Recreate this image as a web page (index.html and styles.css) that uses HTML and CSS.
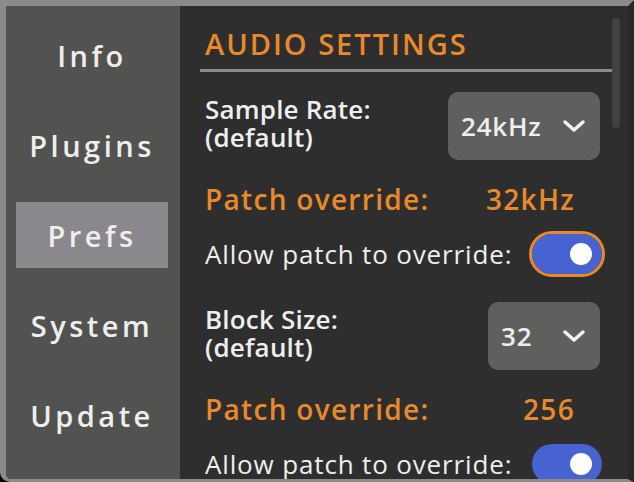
FILE: index.html
```html
<!DOCTYPE html>
<html>
<head>
<meta charset="utf-8">
<link rel="stylesheet" href="styles.css">
</head>
<body>
<div class="window">
  <nav class="sidebar">
    <div class="tab">Info</div>
    <div class="tab">Plugins</div>
    <div class="tab active">Prefs</div>
    <div class="tab">System</div>
    <div class="tab">Update</div>
  </nav>
  <main class="content">
    <div class="scrollbar"></div>
    <h1 class="heading">AUDIO SETTINGS</h1>
    <div class="setting">
      <div class="label"><div>Sample Rate:</div><div>(default)</div></div>
      <div class="select sr"><span>24kHz</span><svg class="chev" viewBox="0 0 24 14" width="24" height="14"><path d="M3 3 L12 11 L21 3" fill="none" stroke="#f2f2f2" stroke-width="3.5" stroke-linecap="round" stroke-linejoin="round"/></svg></div>
    </div>
    <div class="override"><span>Patch override:</span><span class="val">32kHz</span></div>
    <div class="allow"><span>Allow patch to override:</span><div class="toggle focused"><div class="knob"></div></div></div>
    <div class="setting second">
      <div class="label"><div>Block Size:</div><div>(default)</div></div>
      <div class="select bs"><span>32</span><svg class="chev" viewBox="0 0 24 14" width="24" height="14"><path d="M3 3 L12 11 L21 3" fill="none" stroke="#f2f2f2" stroke-width="3.5" stroke-linecap="round" stroke-linejoin="round"/></svg></div>
    </div>
    <div class="override"><span>Patch override:</span><span class="val">256</span></div>
    <div class="allow"><span>Allow patch to override:</span><div class="toggle"><div class="knob"></div></div></div>
  </main>
</div>
</body>
</html>
```
FILE: styles.css
```css
html, body {
  margin: 0;
  padding: 0;
  background: #000;
  width: 634px;
  height: 482px;
  overflow: hidden;
}
.window {
  box-sizing: border-box;
  width: 634px;
  height: 482px;
  display: flex;
  border-top: 6px solid #8b8a8d;
  border-left: 6px solid #8b8a8d;
  border-bottom: 3px solid #8b8a8d;
  border-right: 6px solid #272727;
  border-bottom-left-radius: 10px;
  overflow: hidden;
  background: #2e2e2e;
}
.sidebar {
  width: 174px;
  flex: none;
  background: #525350;
  padding-top: 16px;
  display: flex;
  flex-direction: column;
  gap: 24px;
}
.tab {
  height: 66px;
  flex: none;
  margin: 0 12px 0 10px;
  display: flex;
  align-items: center;
  justify-content: center;
  font-family: "Open Sans", sans-serif;
  font-weight: 600;
  font-size: 29px;
  letter-spacing: 3.5px;
  color: #eeeeee;
}
.tab.active {
  background: #8a888c;
}
.content {
  flex: 1;
  position: relative;
  padding: 20px 0 0 20px;
  font-family: "Open Sans", sans-serif;
  color: #eeeeee;
  overflow: hidden;
}
.scrollbar {
  position: absolute;
  top: 12px;
  left: 432px;
  width: 8px;
  height: 110px;
  border-radius: 4px;
  background: #40423f;
}
.heading {
  margin: 0;
  width: 407px;
  padding: 0 0 7px 5px;
  border-bottom: 3px solid #8a8a8a;
  font-size: 29px;
  font-weight: 600;
  color: #e8892b;
  line-height: 36px;
  letter-spacing: 2px;
}
.setting {
  display: flex;
  justify-content: space-between;
  align-items: flex-start;
  width: 395px;
  margin-top: 20px;
  padding-left: 5px;
}
.setting.second { margin-top: 28px; }
.label {
  margin-top: 3px;
  font-size: 26px;
  font-weight: 600;
  line-height: 28px;
  letter-spacing: 0.2px;
}
.select {
  height: 68px;
  background: #5f605e;
  border-radius: 10px;
  display: flex;
  align-items: center;
  justify-content: space-between;
  box-sizing: border-box;
  padding: 0 14px 0 13px;
  font-size: 26px;
  font-weight: 600;
  letter-spacing: 0.8px;
}
.select.sr { width: 152px; }
.select.bs { width: 112px; }
.override {
  display: flex;
  justify-content: space-between;
  width: 370px;
  padding-left: 5px;
  margin-top: 24px;
  font-size: 28px;
  font-weight: 600;
  color: #e8892b;
  line-height: 30px;
  letter-spacing: 1.3px;
}
.allow {
  display: flex;
  align-items: center;
  padding-left: 5px;
  margin-top: 20px;
  font-size: 26px;
  line-height: 30px;
  font-weight: 400;
  letter-spacing: 0.85px;
}
.toggle {
  margin-left: 20px;
  width: 70px;
  height: 40px;
  border-radius: 20px;
  background: #4763d1;
  position: relative;
  flex: none;
}
.toggle.focused {
  outline: 3.5px solid #e8892b;
}
.knob {
  position: absolute;
  right: 10px;
  top: 9px;
  width: 22px;
  height: 22px;
  border-radius: 50%;
  background: #fff;
}
```
